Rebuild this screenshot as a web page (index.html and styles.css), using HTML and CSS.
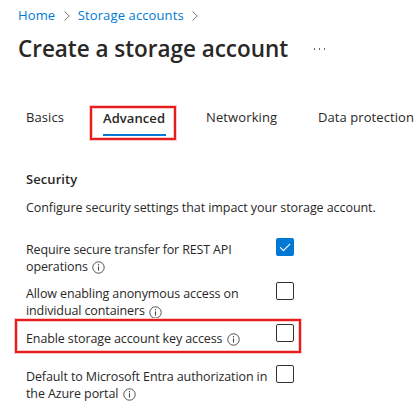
FILE: index.html
```html
<!DOCTYPE html>
<html lang="en">
<head>
<meta charset="utf-8">
<title>Create a storage account</title>
<link rel="stylesheet" href="styles.css">
</head>
<body>
<svg class="defs" aria-hidden="true">
  <symbol id="info" viewBox="0 0 13 13"><circle cx="6.5" cy="6.5" r="5.7" fill="none" stroke="currentColor" stroke-width=".95"/><path d="M6.5 5.4v4.2" stroke="currentColor" stroke-width="1.1"/><circle cx="6.5" cy="3.7" r=".7" fill="currentColor"/></symbol>
  <symbol id="chevron" viewBox="0 0 6 10"><path d="M.6.6 5.2 5 .6 9.4" fill="none" stroke="currentColor" stroke-width="1"/></symbol>
</svg>
<nav class="breadcrumb">
  <a class="home">Home</a><svg class="chevron"><use href="#chevron"/></svg>
  <a>Storage accounts</a><svg class="chevron"><use href="#chevron"/></svg>
</nav>
<header class="header">
  <h1>Create a storage account</h1>
  <span class="more"><i></i><i></i><i></i></span>
</header>
<div class="tabs">
  <span class="tab basics">Basics</span>
  <span class="tab active">Advanced</span>
  <span class="tab networking">Networking</span>
  <span class="tab">Data protection</span>
</div>
<main>
  <h2>Security</h2>
  <p class="intro">Configure security settings that impact your storage account.</p>
  <div class="row secure">
    <div class="label"><span class="tight">Require secure transfer for REST API</span><br>operations<svg class="info"><use href="#info"/></svg></div>
    <span class="check on"><svg viewBox="0 0 18 18"><path d="M4 9.2 7.4 12.6 14.1 5.9" fill="none" stroke="#fff" stroke-width="1.1"/></svg></span>
  </div>
  <div class="row anonymous">
    <div class="label">Allow enabling anonymous access on<br>individual containers<svg class="info low"><use href="#info"/></svg></div>
    <span class="check"></span>
  </div>
  <div class="row key">
    <div class="label">Enable storage account key access<svg class="info"><use href="#info"/></svg></div>
    <span class="check"></span>
  </div>
  <div class="row entra">
    <div class="label">Default to Microsoft Entra authorization in<br>the Azure portal<svg class="info"><use href="#info"/></svg></div>
    <span class="check"></span>
  </div>
</main>
</body>
</html>
```
FILE: styles.css
```css
*, *::after { box-sizing: border-box; }
body {
  margin: 0;
  width: 420px;
  height: 402px;
  overflow: hidden;
  background: #fff;
  color: #292827;
  font: 13px/18px "Open Sans", "Noto Sans", sans-serif;
  white-space: nowrap;
}
.defs { position: absolute; width: 0; height: 0; }
h1, h2, p { margin: 0; }

.breadcrumb {
  display: flex;
  align-items: center;
  height: 30px;
  padding-left: 18px;
  color: #0078d4;
  letter-spacing: .12px;
}
.breadcrumb .chevron { width: 6px; height: 10px; margin: 2px 8px 0 8.5px; color: #777; }

.header { display: flex; height: 38px; padding-left: 18px; }
h1 { width: 296px; font-size: 22.5px; line-height: 38px; font-weight: 600; letter-spacing: -.03px; }
.more { display: flex; gap: 4px; margin-top: 18px; }
.more i { width: 1px; height: 2px; background: #666; }

.tabs { display: flex; height: 72px; padding: 38px 0 0 26px; letter-spacing: .08px; }
.tab { padding-top: 2px; line-height: 18px; }
.basics { width: 77px; }
.active {
  position: relative;
  width: 63px;
  height: 30px;
  padding-top: 3px;
  margin-right: 40px;
  border-bottom: 2px solid #0078d4;
  font-weight: 600;
}
.networking { width: 112px; letter-spacing: .12px; }

/* Red callout frames drawn over the form */
.active::after, .key::after {
  content: "";
  position: absolute;
  border: 2px solid #e91c1c;
  box-shadow: 0 0 0 1px #f9c9c9, inset 0 0 0 1px #f9c9c9;
}
.active::after { left: -13px; top: 0; width: 86px; height: 34px; }
.key::after { left: -11px; top: -5px; width: 286px; height: 34px; }

main { padding: 30px 0 0 26px; }
h2 { font-size: 13px; line-height: 18px; font-weight: 600; letter-spacing: .08px; }
.intro { margin-top: 11px; font-size: 12.5px; line-height: 18px; letter-spacing: -.07px; }
.row { display: flex; align-items: flex-start; font-size: 12.5px; line-height: 17px; letter-spacing: -.11px; }
.label { width: 250px; }
.tight { letter-spacing: -.15px; }
.secure { height: 44px; margin-top: 21px; }
.secure .label, .anonymous .label { padding-top: 3px; }
.anonymous { height: 42px; }
.key { position: relative; height: 41px; }
.key .label { padding-top: 6px; }
.entra .label { padding-top: 3px; }
.info { width: 13px; height: 13px; margin-left: 4.5px; vertical-align: -3px; color: #484746; }
.info.low { vertical-align: -4px; margin-left: 4px; }
.check { width: 18px; height: 18px; border: 1px solid #323130; border-radius: 2px; background: #fff; }
.check.on { border: 0; background: #0078d4; }
.check svg { display: block; width: 18px; height: 18px; }
```
